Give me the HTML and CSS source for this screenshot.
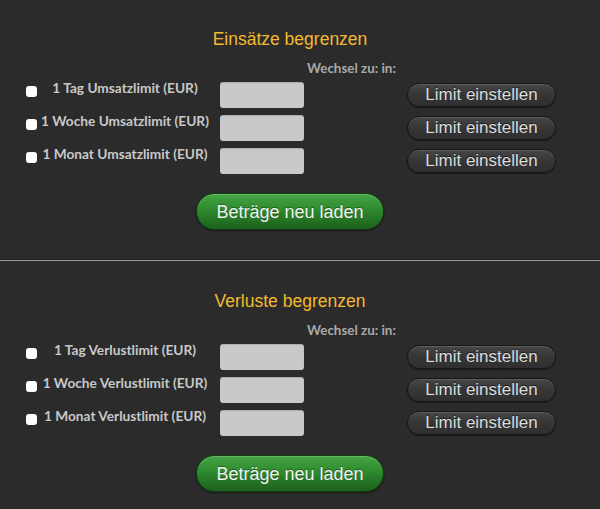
FILE: index.html
```html
<!DOCTYPE html>
<html lang="de">
<head>
<meta charset="utf-8">
<title>Limits</title>
<link rel="stylesheet" href="styles.css">
</head>
<body>
<div class="page">
  <section class="block">
    <h2 class="title">Einsätze begrenzen</h2>
    <div class="hint">Wechsel zu: in:</div>
    <div class="rows">
      <div class="row">
        <input type="checkbox" class="check">
        <span class="label">1 Tag Umsatzlimit (EUR)</span>
        <input type="text" class="amount">
        <button class="limit">Limit einstellen</button>
      </div>
      <div class="row">
        <input type="checkbox" class="check">
        <span class="label">1 Woche Umsatzlimit (EUR)</span>
        <input type="text" class="amount">
        <button class="limit">Limit einstellen</button>
      </div>
      <div class="row">
        <input type="checkbox" class="check">
        <span class="label">1 Monat Umsatzlimit (EUR)</span>
        <input type="text" class="amount">
        <button class="limit">Limit einstellen</button>
      </div>
    </div>
    <div class="actions"><button class="reload">Beträge neu laden</button></div>
  </section>
  <hr class="divider">
  <section class="block block-second">
    <h2 class="title">Verluste begrenzen</h2>
    <div class="hint">Wechsel zu: in:</div>
    <div class="rows">
      <div class="row">
        <input type="checkbox" class="check">
        <span class="label">1 Tag Verlustlimit (EUR)</span>
        <input type="text" class="amount">
        <button class="limit">Limit einstellen</button>
      </div>
      <div class="row">
        <input type="checkbox" class="check">
        <span class="label">1 Woche Verlustlimit (EUR)</span>
        <input type="text" class="amount">
        <button class="limit">Limit einstellen</button>
      </div>
      <div class="row">
        <input type="checkbox" class="check">
        <span class="label">1 Monat Verlustlimit (EUR)</span>
        <input type="text" class="amount">
        <button class="limit">Limit einstellen</button>
      </div>
    </div>
    <div class="actions"><button class="reload">Beträge neu laden</button></div>
  </section>
</div>
</body>
</html>
```

FILE: styles.css
```css
* { box-sizing: border-box; }
html, body {
  margin: 0;
  padding: 0;
  background: #2b2b2b;
  width: 600px;
  height: 509px;
  overflow: hidden;
}
.page {
  width: 600px;
}
.block {
  width: 580px;
  padding-top: 29px;
  padding-bottom: 29px;
}
.block-second {
  padding-top: 30px;
}
.title {
  margin: 0;
  font-family: "Liberation Sans", Arial, sans-serif;
  font-weight: normal;
  font-size: 17.5px;
  line-height: 20px;
  color: #f3b930;
  text-align: center;
}
.hint {
  margin-top: 11px;
  padding-left: 307px;
  font-family: Lato, sans-serif;
  font-weight: bold;
  font-size: 13.4px;
  line-height: 16px;
  color: #a9a9a9;
}
.rows {
  margin-top: 6px;
  display: flex;
  flex-direction: column;
  gap: 7px;
}
.row {
  display: flex;
  align-items: flex-start;
  height: 26px;
  padding-left: 26px;
}
.check {
  -webkit-appearance: none;
  appearance: none;
  width: 11px;
  height: 11px;
  margin: 4px 0 0 0;
  border: 0;
  border-radius: 3px;
  background: #ffffff;
  flex: none;
}
.label {
  width: 176px;
  text-align: center;
  font-family: Lato, sans-serif;
  font-weight: bold;
  font-size: 13.7px;
  line-height: 12px;
  color: #c8c8c8;
  white-space: nowrap;
  flex: none;
}
.amount {
  width: 84px;
  height: 26px;
  margin: 0 0 0 7px;
  padding: 0;
  border: 0;
  border-radius: 3px;
  background: #c9c9cb;
  box-shadow: inset 0 1px 1px rgba(0,0,0,0.15);
  flex: none;
}
.limit {
  margin: 1px 0 0 103px;
  width: 149px;
  height: 24px;
  padding: 0;
  border: 1px solid #161616;
  border-radius: 12px;
  background: linear-gradient(#474747, #363636 50%, #2f2f2f);
  box-shadow: inset 0 1px 0 rgba(255,255,255,0.12), 0 1px 1px rgba(0,0,0,0.4);
  font-family: "Liberation Sans", Arial, sans-serif;
  font-size: 17px;
  line-height: 20px;
  color: #dcdcdc;
  text-shadow: 0 -1px 0 rgba(0,0,0,0.5);
  flex: none;
}
.actions {
  margin-top: 19px;
  display: flex;
  justify-content: center;
}
.reload {
  width: 188px;
  height: 37px;
  padding: 0;
  border: 1px solid #0f3f10;
  border-radius: 19px;
  background: linear-gradient(#45a545, #2e8a2e 45%, #226f22 80%, #1d611d);
  box-shadow: inset 0 1px 0 rgba(255,255,255,0.2), 0 1px 2px rgba(0,0,0,0.5);
  font-family: "Liberation Sans", Arial, sans-serif;
  font-size: 18px;
  line-height: 22px;
  color: #f2f2f2;
  text-shadow: 0 -1px 0 rgba(0,0,0,0.35);
}
.divider {
  margin: 0;
  height: 2px;
  border: 0;
  border-top: 1px solid #1e1e1e;
  border-bottom: 1px solid #9a9a9a;
}
```
